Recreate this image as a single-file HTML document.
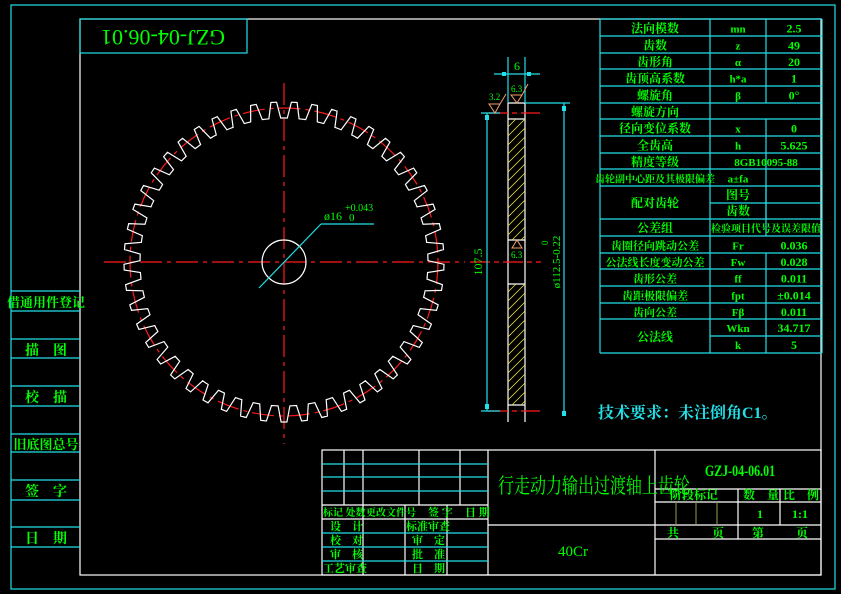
<!DOCTYPE html>
<html><head><meta charset="utf-8"><style>
html,body{margin:0;padding:0;background:#000;width:841px;height:594px;overflow:hidden}
svg{display:block}
text{font-family:"Liberation Serif","Noto Serif CJK SC","Noto Sans CJK SC",serif;fill:#00ff00}
.c{stroke:#22e0e8;stroke-width:1.2;fill:none}
.w{stroke:#fff;stroke-width:1.2;fill:none}
.r{stroke:#ff1a1a;stroke-width:1.2;fill:none}
#tbl text{font-weight:bold}
</style></head><body>
<svg id="s" width="841" height="594" viewBox="0 0 841 594" xmlns="http://www.w3.org/2000/svg">
<rect x="11" y="5" width="824" height="584" class="c"/>
<rect x="80" y="19" width="741" height="556" class="w"/>
<rect x="80" y="19" width="167" height="34" class="c"/>
<text x="163" y="46" font-size="22" text-anchor="middle" transform="rotate(180 163 38)">GZJ-04-06.01</text>
<g class="c">
<line x1="11" y1="291" x2="80" y2="291"/><line x1="11" y1="311" x2="80" y2="311"/>
<line x1="11" y1="339" x2="80" y2="339"/><line x1="11" y1="358" x2="80" y2="358"/>
<line x1="11" y1="386" x2="80" y2="386"/><line x1="11" y1="406" x2="80" y2="406"/>
<line x1="11" y1="434" x2="80" y2="434"/><line x1="11" y1="452" x2="80" y2="452"/>
<line x1="11" y1="480" x2="80" y2="480"/><line x1="11" y1="500" x2="80" y2="500"/>
<line x1="11" y1="527" x2="80" y2="527"/><line x1="11" y1="547" x2="80" y2="547"/>
</g>
<g font-size="14" text-anchor="middle" font-weight="bold">
<text x="46" y="307" font-size="13">借通用件登记</text>
<text x="46" y="355">描　图</text>
<text x="46" y="402">校　描</text>
<text x="46" y="449" font-size="13">旧底图总号</text>
<text x="46" y="496">签　字</text>
<text x="46" y="543">日　期</text>
</g>
<g class="r" stroke-dasharray="22,5,4,5">
<line x1="104" y1="262" x2="465" y2="262"/>
<line x1="284" y1="83" x2="284" y2="444"/>
<circle cx="284" cy="262" r="154"/>
</g>
<path id="gear" class="w" d=""/>
<circle cx="284" cy="262" r="22" class="w"/>
<line x1="259" y1="288" x2="321" y2="224" class="c"/>
<line x1="321" y1="224" x2="374" y2="224" class="c"/>
<text x="324" y="220" font-family="Liberation Sans" font-size="12" fill="#00ff00">ø16</text>
<text x="349" y="221" font-family="Liberation Sans" font-size="11">0</text>
<text x="345" y="211" font-family="Liberation Sans" font-size="10">+0.043</text>
<g class="w">
<line x1="508" y1="103" x2="508" y2="422"/><line x1="525" y1="103" x2="525" y2="422"/>
<line x1="508" y1="103" x2="525" y2="103"/><line x1="508" y1="119" x2="525" y2="119"/>
<line x1="508" y1="240" x2="525" y2="240"/><line x1="508" y1="284" x2="525" y2="284"/>
<line x1="508" y1="405" x2="525" y2="405"/>
</g>
<g id="hatch" stroke="#e8e040" stroke-width="0.8"></g>
<g class="r"><line x1="488" y1="113" x2="540" y2="113" stroke-dasharray="20,4,5,4"/><line x1="488" y1="411" x2="540" y2="411" stroke-dasharray="20,4,5,4"/><line x1="470" y1="262" x2="541" y2="262" stroke-dasharray="20,4,5,4"/></g>
<g class="c">
<line x1="508" y1="57" x2="508" y2="103"/><line x1="525" y1="57" x2="525" y2="103"/>
<line x1="494" y1="74" x2="540" y2="74"/>
<line x1="487" y1="113" x2="487" y2="411"/><line x1="481" y1="113" x2="500" y2="113"/><line x1="481" y1="411" x2="500" y2="411"/>
<line x1="564" y1="103" x2="564" y2="416"/><line x1="525" y1="103" x2="570" y2="103"/>
</g>
<g fill="#22e0e8"><rect x="502" y="72" width="4" height="4"/><rect x="527" y="72" width="4" height="4"/><rect x="485" y="115" width="4" height="5"/><rect x="485" y="404" width="4" height="5"/><rect x="562" y="106" width="4" height="5"/><rect x="562" y="411" width="4" height="5"/></g>
<text x="517" y="70" font-family="Liberation Sans" font-size="12" text-anchor="middle">6</text>
<text x="489" y="100" font-family="Liberation Sans" font-size="9">3.2</text>
<text x="511" y="92" font-family="Liberation Sans" font-size="9">6.3</text>
<text x="511" y="258" font-family="Liberation Sans" font-size="9">6.3</text>
<g stroke="#f0a070" fill="none" stroke-width="1"><path d="M489 104 L500 104 L495 113 Z M500 104 L506 94"/><path d="M511 95 L522 95 L517 103 Z M522 95 L528 84"/><path d="M512 248 L522 248 L517 240 Z"/></g>
<text x="482" y="262" font-family="Liberation Sans" font-size="12" text-anchor="middle" transform="rotate(-90 482 262)">107.5</text>
<text x="560" y="262" font-family="Liberation Sans" font-size="11" text-anchor="middle" transform="rotate(-90 560 262)">ø112.5-0.22</text>
<text x="548" y="245" font-family="Liberation Sans" font-size="9" transform="rotate(-90 548 245)">0</text>
<g id="tbl"></g>
<text x="598" y="418" font-size="16" font-weight="bold" style="fill:#22e0e8">技术要求：未注倒角C1。</text>
<g class="w">
<rect x="322" y="450" width="499" height="125"/>
<line x1="488" y1="450" x2="488" y2="575"/><line x1="655" y1="450" x2="655" y2="575"/>
<line x1="344" y1="450" x2="344" y2="505"/><line x1="363" y1="450" x2="363" y2="575"/>
<line x1="419" y1="450" x2="419" y2="505"/><line x1="460" y1="450" x2="460" y2="505"/>
<line x1="405" y1="505" x2="405" y2="575"/><line x1="447" y1="505" x2="447" y2="575"/>
<line x1="322" y1="505" x2="488" y2="505"/><line x1="322" y1="519" x2="488" y2="519"/>
<line x1="655" y1="489" x2="821" y2="489"/><line x1="655" y1="502" x2="821" y2="502"/>
<line x1="488" y1="525" x2="821" y2="525"/><line x1="655" y1="539" x2="821" y2="539"/>
<line x1="738" y1="489" x2="738" y2="539"/><line x1="780" y1="489" x2="780" y2="525"/>
</g>
<g class="c"><line x1="322" y1="464" x2="488" y2="464"/><line x1="322" y1="477" x2="488" y2="477"/><line x1="322" y1="491" x2="488" y2="491"/><line x1="322" y1="533" x2="488" y2="533"/><line x1="322" y1="547" x2="488" y2="547"/><line x1="322" y1="561" x2="488" y2="561"/></g>
<g stroke="#9a9a50"><line x1="676" y1="502" x2="676" y2="525"/><line x1="696" y1="502" x2="696" y2="525"/><line x1="717" y1="502" x2="717" y2="525"/></g>
<text x="498" y="496" font-size="16" transform="translate(0,-152) scale(1,1.3)">行走动力输出过渡轴上齿轮</text>
<text x="740" y="476" font-size="16" text-anchor="middle" font-weight="bold" transform="translate(185,0) scale(0.75,1)">GZJ-04-06.01</text>
<text x="573" y="556" font-size="15" text-anchor="middle">40Cr</text>
<g font-size="12" font-weight="bold">
<text x="670" y="499">阶段标记</text><text x="743" y="499">数　量</text><text x="783" y="499">比　例</text>
<text x="760" y="518" text-anchor="middle">1</text><text x="800" y="518" text-anchor="middle">1:1</text>
<text x="667" y="537">共</text><text x="712" y="537">页</text><text x="752" y="537">第</text><text x="796" y="537">页</text>
<text x="323" y="516" font-size="10">标记 处数</text><text x="366" y="516" font-size="10">更改文件号</text><text x="428" y="516" font-size="11">签 字</text><text x="465" y="516" font-size="11">日 期</text>
<g font-size="11"><text x="330" y="530">设　计</text><text x="330" y="544">校　对</text><text x="330" y="558">审　核</text><text x="323" y="572">工艺审查</text>
<text x="406" y="530">标准审查</text><text x="412" y="544">审　定</text><text x="412" y="558">批　准</text><text x="412" y="572">日　期</text></g>
</g>
</svg>
<script>
var ns="http://www.w3.org/2000/svg",s=document.getElementById('s');
var N=49,cx=284,cy=262,ro=160,rr=144,d="";
for(var i=0;i<N;i++){var a=2*Math.PI/N,b=i*a-Math.PI/2;
var pts=[[rr,b],[rr,b+a*0.18],[ro,b+a*0.36],[ro,b+a*0.64],[rr,b+a*0.82]];
pts.forEach(function(p,j){var x=cx+p[0]*Math.cos(p[1]),y=cy+p[0]*Math.sin(p[1]);d+=(i==0&&j==0?"M":"L")+x.toFixed(1)+" "+y.toFixed(1)+" ";});}
document.getElementById('gear').setAttribute('d',d+"Z");
var h=document.getElementById('hatch');
function hatch(y0,y1){for(var y=y0+8;y<=y1+17;y+=9){var x1=508,yy1=y,x2=525,yy2=y-17;if(yy1>y1){x1=508+(yy1-y1);yy1=y1;}if(yy2<y0){x2=525-(y0-yy2);yy2=y0;}if(x1<x2){var l=document.createElementNS(ns,'line');l.setAttribute('x1',x1);l.setAttribute('y1',yy1);l.setAttribute('x2',x2);l.setAttribute('y2',yy2);h.appendChild(l);}}}
hatch(119,240);hatch(284,405);
var t=document.getElementById('tbl');
function L(x1,y1,x2,y2){var l=document.createElementNS(ns,'line');l.setAttribute('x1',x1);l.setAttribute('y1',y1);l.setAttribute('x2',x2);l.setAttribute('y2',y2);l.setAttribute('class','c');t.appendChild(l);}
function T(x,y,s,fs,anc){var e=document.createElementNS(ns,'text');e.setAttribute('x',x);e.setAttribute('y',y);e.setAttribute('font-size',fs||12);e.setAttribute('text-anchor',anc||'middle');e.textContent=s;t.appendChild(e);}
var X0=600,X1=710,X2=766,X3=822;
var ys=[19,36,53,69,86,103,119,136,153,169,186,219,236,253,269,286,303,319,353];
ys.forEach(function(y){L(X0,y,X3,y);});
L(X1,203,X3,203);L(X1,336,X3,336);
L(X0,19,X0,353);L(X3,19,X3,353);
L(X1,19,X1,353);
[[19,103],[119,169],[169,236],[253,353]].forEach(function(r){L(X2,r[0],X2,r[1]);});
L(X2,186,X2,219);
var rows=[["法向模数","mn","2.5"],["齿数","z","49"],["齿形角","α","20"],["齿顶高系数","h*a","1"],["螺旋角","β","0°"],["螺旋方向","",""],["径向变位系数","x","0"],["全齿高","h","5.625"],["精度等级","8GB10095-88",""],["齿轮副中心距及其极限偏差","a±fa",""]];
rows.forEach(function(r,i){var y=ys[i]+ys[i+1];y=y/2+5;T(655,y,r[0],i==9?10:12);if(i==8){T(766,y,r[1],11);}else{T(738,y,r[1],11);T(794,y,r[2],12);}});
T(655,207,"配对齿轮",12);T(738,199,"图号",12);T(738,215,"齿数",12);
T(655,232,"公差组",12);T(766,232,"检验项目代号及误差限值",10);
var r2=[["齿圈径向跳动公差","Fr","0.036"],["公法线长度变动公差","Fw","0.028"],["齿形公差","ff","0.011"],["齿距极限偏差","fpt","±0.014"],["齿向公差","Fβ","0.011"]];
r2.forEach(function(r,i){var y=(ys[12+i]+ys[13+i])/2+5;T(655,y,r[0],11);T(738,y,r[1],11);T(794,y,r[2],12);});
T(655,341,"公法线",12);T(738,332,"Wkn",11);T(794,332,"34.717",12);T(738,349,"k",11);T(794,349,"5",12);
</script>
</body></html>
